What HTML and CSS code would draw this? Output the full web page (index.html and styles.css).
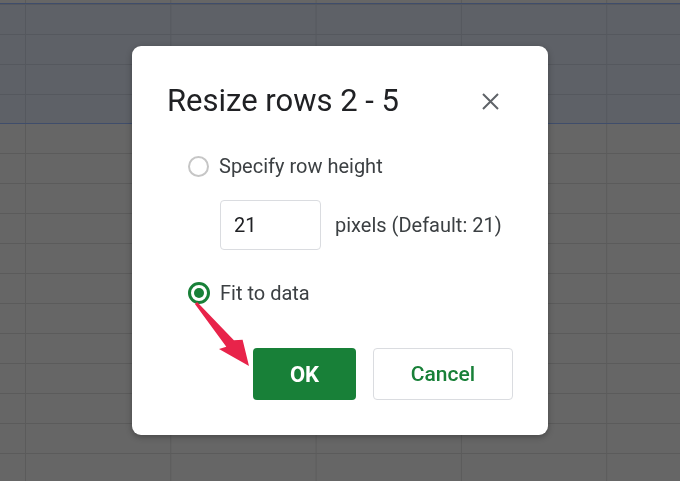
FILE: index.html
```html
<!DOCTYPE html>
<html lang="en">
<head>
    <meta charset="UTF-8">
    <meta name="viewport" content="width=device-width, initial-scale=1.0">
    <title>Resize rows</title>
    <link rel="stylesheet" href="styles.css">
</head>
<body>
    <div class="sheet">
        <div class="selection"></div>
    </div>

    <div class="overlay">
        <div class="dialog">
            <div class="dialog-head">
                <h2>Resize rows 2 - 5</h2>
                <span class="close">
                    <svg width="17" height="17" viewBox="0 0 17 17"><path d="M1 1L16 16M16 1L1 16" stroke="#5f6368" stroke-width="2"/></svg>
                </span>
            </div>

            <div class="option">
                <span class="radio"></span>
                <span>Specify row height</span>
            </div>
            <div class="height-row">
                <div class="input">21</div>
                <span>pixels (Default: 21)</span>
            </div>
            <div class="option">
                <span class="radio checked"></span>
                <span>Fit to data</span>
            </div>

            <div class="actions">
                <button class="btn ok">OK</button>
                <button class="btn cancel">Cancel</button>
            </div>

            <svg class="arrow" width="60" height="70" viewBox="0 0 60 70">
                <path d="M4.1 2 L40.9 40.3 L49.6 39.7 L56 66 L26 48.9 L33.3 46.7 L1.9 4 Z" fill="#e8234a"/>
            </svg>
        </div>
    </div>
</body>
</html>
```

FILE: styles.css
```css
body {
    margin: 0;
    width: 680px;
    height: 481px;
    overflow: hidden;
    font-family: Roboto, "Liberation Sans", sans-serif;
    background-color: #666666;
    background-image:
        linear-gradient(to right, #5b5b5b 1px, transparent 1px),
        linear-gradient(to bottom, #5b5b5b 1px, transparent 1px);
    background-size: 145.3px 30px;
    background-position: 25px 3px;
}
.sheet {
    padding-top: 3px;
}
.selection {
    height: 119px;
    background-color: #5e6167;
    background-image:
        linear-gradient(to right, #55585e 1px, transparent 1px),
        linear-gradient(to bottom, #55585e 1px, transparent 1px);
    background-size: 145.3px 30px;
    background-position: 25px 0;
    border-top: 1px solid #3f4d6b;
    border-bottom: 1px solid #3f4d6b;
}
.overlay {
    position: fixed;
    inset: 0;
    display: flex;
    align-items: center;
    justify-content: center;
}
.dialog {
    position: relative;
    width: 416px;
    height: 389px;
    box-sizing: border-box;
    padding: 35px 0 0 35px;
    background: #fff;
    border-radius: 9px;
    box-shadow: 0 2px 6px rgba(0, 0, 0, 0.3);
    color: #3c4043;
}
.dialog-head {
    display: flex;
    align-items: center;
    justify-content: space-between;
    padding-right: 49px;
    height: 40px;
}
.dialog-head h2 {
    margin: 0;
    font-size: 31px;
    line-height: 40px;
    font-weight: 400;
    color: #202124;
}
.close {
    display: flex;
}
.option {
    display: flex;
    align-items: center;
    gap: 10px;
    margin-left: 21px;
    font-size: 20px;
    height: 30px;
}
.dialog-head + .option {
    margin-top: 30px;
}
.radio {
    width: 17px;
    height: 17px;
    border: 2px solid #c6c6c6;
    border-radius: 50%;
    display: flex;
    align-items: center;
    justify-content: center;
}
.radio.checked {
    border: 3px solid #188038;
    width: 16px;
    height: 16px;
}
.radio.checked::after {
    content: "";
    width: 10px;
    height: 10px;
    border-radius: 50%;
    background: #188038;
}
.height-row {
    display: flex;
    align-items: center;
    gap: 14px;
    margin: 19px 0 28px 53px;
    font-size: 20px;
}
.input {
    width: 101px;
    height: 50px;
    box-sizing: border-box;
    padding-left: 13px;
    border: 1px solid #dadce0;
    border-radius: 4px;
    display: flex;
    align-items: center;
    color: #202124;
}
.actions {
    display: flex;
    gap: 17px;
    margin: 40px 0 0 86px;
}
.btn {
    height: 52px;
    border-radius: 4px;
    font-family: Roboto, "Liberation Sans", sans-serif;
}
.ok {
    width: 103px;
    background: #188038;
    color: #fff;
    border: none;
    font-weight: 700;
    font-size: 22px;
}
.cancel {
    width: 140px;
    background: #fff;
    color: #188038;
    border: 1px solid #dadce0;
    font-weight: 500;
    font-size: 21px;
}
.arrow {
    position: absolute;
    left: 61px;
    top: 254px;
}
```
